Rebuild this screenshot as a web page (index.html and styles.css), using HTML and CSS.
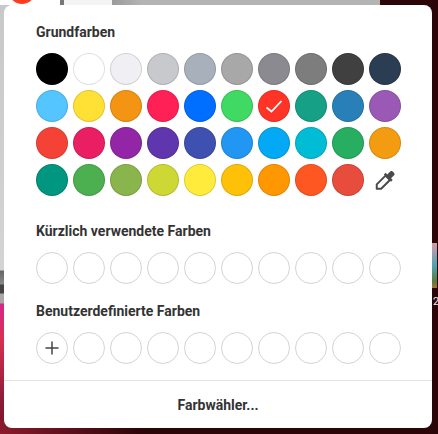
FILE: index.html
```html
<!DOCTYPE html>
<html lang="de">
<head>
  <meta charset="UTF-8" />
  <meta name="viewport" content="width=device-width, initial-scale=1.0"/>
  <title>Farben</title>
  <link rel="stylesheet" href="styles.css">
</head>
<body>
  <!-- what shows behind the popover -->
  <div class="backdrop">
    <div class="bg-left"></div>
    <div class="bg-bottom"></div>
    <div class="bg-dot"></div>
    <div class="bg-tab"></div>
    <div class="bg-bar"></div>
    <div class="bg-thumb"></div>
    <div class="bg-num">2</div>
  </div>

  <div class="popover">
    <div class="popover-body">
      <h2>Grundfarben</h2>
      <div class="swatches">
        <div class="swatch" style="background:#000000"></div>
        <div class="swatch" style="background:#ffffff"></div>
        <div class="swatch" style="background:#efeff4"></div>
        <div class="swatch" style="background:#c8c9cd"></div>
        <div class="swatch" style="background:#a8b0bb"></div>
        <div class="swatch" style="background:#a8a8a8"></div>
        <div class="swatch" style="background:#8a8a90"></div>
        <div class="swatch" style="background:#7d7d7d"></div>
        <div class="swatch" style="background:#404040"></div>
        <div class="swatch" style="background:#2a3d52"></div>

        <div class="swatch" style="background:#55c5ff"></div>
        <div class="swatch" style="background:#ffe135"></div>
        <div class="swatch" style="background:#f39412"></div>
        <div class="swatch" style="background:#ff2056"></div>
        <div class="swatch" style="background:#006eff"></div>
        <div class="swatch" style="background:#3fd963"></div>
        <div class="swatch selected" style="background:#ff3426">
          <svg viewBox="0 0 20 20" width="20" height="20"><path d="M2.500 11.500 L7.500 15.500 L17.500 5" fill="none" stroke="#fff" stroke-width="1.800"/></svg>
        </div>
        <div class="swatch" style="background:#16a085"></div>
        <div class="swatch" style="background:#2980b9"></div>
        <div class="swatch" style="background:#9b59b6"></div>

        <div class="swatch" style="background:#f44336"></div>
        <div class="swatch" style="background:#e91e63"></div>
        <div class="swatch" style="background:#9226a6"></div>
        <div class="swatch" style="background:#5f36ad"></div>
        <div class="swatch" style="background:#3f51b0"></div>
        <div class="swatch" style="background:#2196f3"></div>
        <div class="swatch" style="background:#03a9f4"></div>
        <div class="swatch" style="background:#00bcd4"></div>
        <div class="swatch" style="background:#27ae60"></div>
        <div class="swatch" style="background:#f39c12"></div>

        <div class="swatch" style="background:#009680"></div>
        <div class="swatch" style="background:#4caf50"></div>
        <div class="swatch" style="background:#8ab54c"></div>
        <div class="swatch" style="background:#cdd835"></div>
        <div class="swatch" style="background:#ffeb3b"></div>
        <div class="swatch" style="background:#ffc107"></div>
        <div class="swatch" style="background:#ff9800"></div>
        <div class="swatch" style="background:#ff5722"></div>
        <div class="swatch" style="background:#e74c3c"></div>
        <div class="picker-icon">
          <svg viewBox="0 0 20 20" width="22" height="22">
            <path d="M10.500 6 L14.500 10 L6.500 18 L2.500 18 L2.500 14 Z" fill="none" stroke="#4a4a4a" stroke-width="1.800" stroke-linejoin="round"/>
            <path d="M9 5 L15.500 11.500 L17 10 L15.500 8.500 L18.500 5.500 C19.500 4 16.500 1 15 2 L12 5 L10.500 3.500 Z" fill="#4a4a4a"/>
          </svg>
        </div>
      </div>

      <h2 class="recent-title">Kürzlich verwendete Farben</h2>
      <div class="swatches">
        <div class="swatch empty"></div>
        <div class="swatch empty"></div>
        <div class="swatch empty"></div>
        <div class="swatch empty"></div>
        <div class="swatch empty"></div>
        <div class="swatch empty"></div>
        <div class="swatch empty"></div>
        <div class="swatch empty"></div>
        <div class="swatch empty"></div>
        <div class="swatch empty"></div>
      </div>

      <h2 class="custom-title">Benutzerdefinierte Farben</h2>
      <div class="swatches">
        <div class="swatch empty add">
          <svg viewBox="0 0 16 16" width="16" height="16"><path d="M8 1.500 V14.500 M1.500 8 H14.500" stroke="#444" stroke-width="1.500" fill="none"/></svg>
        </div>
        <div class="swatch empty"></div>
        <div class="swatch empty"></div>
        <div class="swatch empty"></div>
        <div class="swatch empty"></div>
        <div class="swatch empty"></div>
        <div class="swatch empty"></div>
        <div class="swatch empty"></div>
        <div class="swatch empty"></div>
        <div class="swatch empty"></div>
      </div>
    </div>
    <div class="popover-footer">Farbwähler...</div>
  </div>
</body>
</html>
```

FILE: styles.css
```css
* {
  box-sizing: border-box;
}

html, body {
  height: 100%;
}

body {
  margin: 0;
  overflow: hidden;
  position: relative;
  padding: 5px 6px 6px 4px;
  font-family: Roboto, "Liberation Sans", sans-serif;
  background: #2c0508;
}

.backdrop {
  position: absolute;
  inset: 0;
  overflow: hidden;
}

.bg-left {
  position: absolute;
  left: 0;
  top: 0;
  width: 12px;
  height: 434px;
  background: linear-gradient(to bottom, #c8c8c8 0, #d4d4d4 270px, #666 271px, #888 284px, #444 285px, #444 293px, #a8a8a8 294px, #a8a8a8 303px, #d6278a 304px, #d83050 340px, #8c1c38 400px, #7a1020 434px);
}

.bg-bottom {
  position: absolute;
  left: 0;
  top: 420px;
  width: 140px;
  height: 14px;
  background: linear-gradient(to right, #8a1a2c, #2c0508);
}

.bg-dot {
  position: absolute;
  z-index: 1;
  left: 9px;
  top: -22px;
  width: 26px;
  height: 26px;
  border-radius: 50%;
  background: #ff3b20;
}

.bg-tab {
  position: absolute;
  left: 0;
  top: 0;
  width: 112px;
  height: 5px;
  background: linear-gradient(to right, #fff 60px, #777 60px, #777 64px, #f4f4f4 64px);
}

.bg-bar {
  position: absolute;
  left: 112px;
  top: 0;
  width: 268px;
  height: 5px;
  background: linear-gradient(to right, #9a9a9a, #b4b4b4 30px);
}

.bg-thumb {
  position: absolute;
  left: 432px;
  top: 243px;
  width: 5px;
  height: 45px;
  background: linear-gradient(to bottom, #d79aa8, #4ea3b5 50%, #5b7a3a 85%, #a3763a);
}

.bg-num {
  position: absolute;
  left: 433px;
  top: 295px;
  color: #eee;
  font-size: 11px;
}

.popover {
  position: relative;
  height: 423px;
  background: #fff;
  border-radius: 8px;
  display: flex;
  flex-direction: column;
}

.popover-body {
  flex: 1;
  padding: 19px 32px 0;
}

h2 {
  margin: 0;
  font-size: 14px;
  line-height: 16px;
  font-weight: 700;
  color: #333;
}

.swatches {
  display: grid;
  grid-template-columns: repeat(10, 32px);
  gap: 5px;
  margin-top: 13px;
}

.swatch {
  width: 32px;
  height: 32px;
  border-radius: 50%;
  border: 1px solid rgba(0,0,0,0.12);
  display: flex;
  align-items: center;
  justify-content: center;
}

.swatch.empty {
  background: #fff;
  border-color: #d4d4d4;
}

.picker-icon {
  width: 32px;
  height: 32px;
  display: flex;
  align-items: center;
  justify-content: center;
}

.recent-title {
  margin-top: 27px;
}

.custom-title {
  margin-top: 19px;
}

.popover-footer {
  height: 48px;
  border-top: 1px solid #e4e4e4;
  display: flex;
  align-items: center;
  justify-content: center;
  font-size: 14px;
  font-weight: 700;
  color: #333;
}
```
